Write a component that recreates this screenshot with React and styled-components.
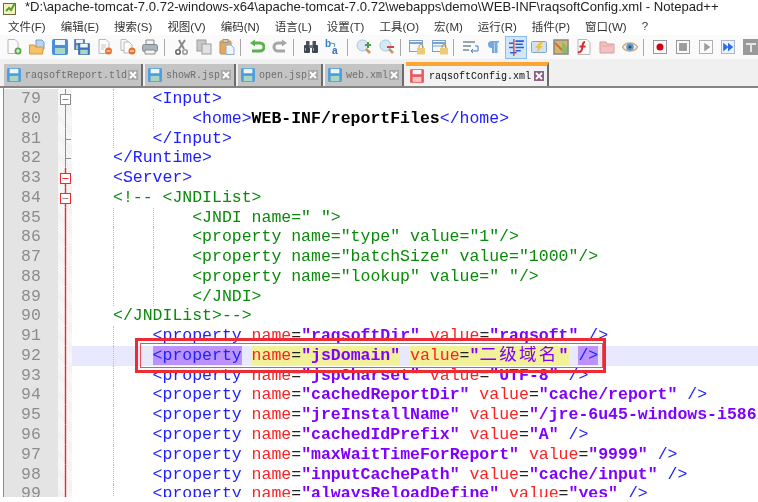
import React from 'react'
import styled, { createGlobalStyle } from 'styled-components'

const GlobalStyle = createGlobalStyle`
  html, body {
    margin: 0;
    padding: 0;
    background: #fff;
    overflow: hidden;
  }
`

const LINE_HEIGHT = 19.78
const CHAR = 9.9

const Screen = styled.div`
  width: 758px;
  height: 502px;
  overflow: hidden;
  position: relative;
  background: #fff;
  font-family: "Liberation Sans", "Noto Sans CJK SC", sans-serif;
  filter: blur(0.4px);
`

const TitleBar = styled.div`
  height: 17px;
  display: flex;
  align-items: center;
  gap: 8px;
  padding-left: 3px;
  overflow: hidden;
`

const TitleText = styled.span`
  font-size: 13.1px;
  color: #222;
  white-space: nowrap;
  margin-top: -5px;
`

const MenuBar = styled.div`
  height: 18px;
  display: flex;
  align-items: center;
  gap: 15px;
  padding-left: 8px;
`

const MenuItem = styled.span`
  font-size: 11.5px;
  color: #333;
  white-space: nowrap;
`

const ToolBar = styled.div`
  height: 25px;
  display: flex;
  align-items: center;
  padding-left: 3px;
  background: #fafafa;
  border-bottom: 1px solid #f0f0f0;
  box-sizing: border-box;
`

const Tool = styled.div`
  width: 22.7px;
  height: 23px;
  flex: none;
  display: flex;
  align-items: center;
  justify-content: center;
  box-sizing: border-box;
  background: ${p => (p.$active ? '#d3e6f8' : 'transparent')};
  border: ${p => (p.$active ? '1px solid #8cbcea' : 'none')};
`

const Sep = styled.div`
  width: 1px;
  height: 17px;
  flex: none;
  margin: 0 5px 0 2px;
  background: #a8a8a8;
`

const TabStrip = styled.div`
  height: 28px;
  display: flex;
  align-items: flex-end;
  gap: 2px;
  padding-left: 4px;
  background: #f0f0f0;
  box-sizing: border-box;
  border-bottom: 2px solid #858585;
`

const Tab = styled.div`
  height: ${p => (p.$active ? '24px' : '22px')};
  display: flex;
  align-items: center;
  padding: 0 3px 0 ${p => (p.$active ? '4px' : '3px')};
  box-sizing: border-box;
  background: ${p => (p.$active ? '#f2f2f2' : '#c4c4c4')};
  border-top: ${p => (p.$active ? '4px solid #faa534' : 'none')};
  border-right: 2px solid #6c6c6c;
`

const TabIcon = styled.svg`
  width: 14px;
  height: 14px;
  flex: none;
  margin-right: ${p => (p.$active ? '5px' : '4px')};
`

const TabLabel = styled.span`
  font-family: "Liberation Mono", monospace;
  font-size: 10px;
  margin-right: ${p => (p.$active ? '3px' : '1px')};
  color: ${p => (p.$active ? '#111' : '#6e6e6e')};
`

const TabClose = styled.span`
  width: 10px;
  height: 10px;
  flex: none;
  display: flex;
  background: ${p => (p.$active ? '#8c6482' : '#a8a8a8')};
`

const Editor = styled.div`
  height: 409px;
  padding-top: 1px;
  box-sizing: border-box;
  margin-left: 3px;
  border-left: 1px solid #8a8a8a;
  overflow: hidden;
`

const Row = styled.div`
  height: ${LINE_HEIGHT}px;
  display: grid;
  grid-template-columns: 54px 14px 1fr;
  font-family: "Liberation Mono", "Noto Sans CJK SC", monospace;
  font-size: 16.5px;
  line-height: ${LINE_HEIGHT}px;
  background: ${p => (p.$current ? '#e8e8ff' : 'transparent')};
`

const LineNumber = styled.div`
  background: #e4e4e4;
  color: #8c8c8c;
  padding-left: 17px;
`

const FoldCell = styled.div`
  background-color: #f2f2f2;
  background-image: repeating-linear-gradient(45deg, #fafafa 0 1px, #efefef 1px 2px);
  display: flex;
`

const Code = styled.div`
  padding-left: 1.4px;
  white-space: pre;
  overflow: hidden;
  display: flex;
  height: ${LINE_HEIGHT}px;
`

const Indent = styled.span`
  width: ${CHAR * 4}px;
  flex: none;
  box-sizing: border-box;
  border-left: ${p => (p.$guide ? '1px dotted #bdbdbd' : '0')};
`

const Tok = styled.span`
  color: ${p => p.$color};
  font-weight: ${p => (p.$bold ? 700 : 400)};
  background: ${p => p.$mark || 'transparent'};
`

const Wide = styled.span`
  font-size: 17.5px;
  line-height: 0;
  letter-spacing: 2.3px;
  font-family: "Noto Sans CJK SC", sans-serif;
`

const Callout = styled.div`
  position: absolute;
  left: 135px;
  top: 338px;
  width: 471px;
  height: 35px;
  box-sizing: border-box;
  border: 3px solid #ee2b34;
  pointer-events: none;
  &::after {
    content: '';
    position: absolute;
    left: 2px;
    top: 2px;
    right: 0;
    bottom: 2px;
    border: 1px solid #f0525a;
  }
`

const Floppy = ({ c = '#4a8fd8' }) => (
  <>
    <rect x=".5" y=".5" width="15" height="15" rx="1" fill={c} stroke={c} />
    <rect x="3" y="1" width="10" height="5" fill="#eef5fb" />
    <rect x="3" y="9" width="10" height="6" fill={c === '#e8585c' ? '#f6c4c4' : '#a9d6c2'} />
  </>
)

const Page = ({ x = 2, y = 0.5, w = 10, h = 14 }) => (
  <path
    d={`M${x} ${y}h${w - 3}l3 3v${h - 3}h-${w}z`}
    fill="#fbfbfb"
    stroke="#b8b8b8"
  />
)

const Icon = ({ children, w = 16, h = 16 }) => (
  <svg width={w} height={h} viewBox="0 0 16 16">{children}</svg>
)

const tools = [
  <Icon><Page /><circle cx="12" cy="12" r="3.5" fill="#5aa84a" /><path d="M10 12h4M12 10v4" stroke="#fff" /></Icon>,
  <Icon><path d="M7 1h6l2 2v7H7z" fill="#b8d4f0" stroke="#6f9fd0" /><path d="M0.5 6h5l1 2h8l-1 7h-13z" fill="#f8c268" stroke="#d8953a" /></Icon>,
  <Icon><Floppy /></Icon>,
  <Icon><svg x="0" y="0" width="11" height="11" viewBox="0 0 16 16"><Floppy c="#5b78b8" /></svg><svg x="4" y="4" width="12" height="12" viewBox="0 0 16 16"><Floppy c="#3f6fb4" /></svg></Icon>,
  <Icon><Page /><path d="M4 6h5M4 8h5M4 10h3" stroke="#c8c8c8" /><circle cx="11.5" cy="12" r="3.5" fill="#e8722c" /><path d="M9.5 12h4" stroke="#fff" /></Icon>,
  <Icon><Page x={1} w={8} h={11} /><Page x={4} y={3} w={8} h={11} /><circle cx="12" cy="12" r="3.5" fill="#e8722c" /><path d="M10 12h4" stroke="#fff" /></Icon>,
  <Icon><path d="M4 1h8v5H4z" fill="#f2f2f2" stroke="#8a8a8a" /><rect x=".5" y="5.5" width="15" height="7" rx="2" fill="#aab4bc" stroke="#7c848c" /><path d="M3 11h10v4H3z" fill="#f4f4f4" stroke="#8c8c8c" /></Icon>,
  <Sep />,
  <Icon><path d="M12 1L6 10M6 1l5 9" stroke="#8a8a8a" strokeWidth="2" /><circle cx="5" cy="13" r="2.2" fill="none" stroke="#666" strokeWidth="1.6" /><circle cx="12" cy="13" r="2.2" fill="none" stroke="#999" strokeWidth="1.6" /></Icon>,
  <Icon><rect x="1" y="1" width="9" height="11" fill="#c8c8c8" stroke="#9c9c9c" /><rect x="6" y="5" width="9" height="10" fill="#e2e2e2" stroke="#9c9c9c" /></Icon>,
  <Icon><rect x="1" y="2" width="11" height="13" rx="1" fill="#e2a860" stroke="#c08c48" /><rect x="4" y="0.5" width="5" height="3" fill="#d2ccba" stroke="#9c9580" /><path d="M7 6h5l3 3v6.500H7z" fill="#eef4fb" stroke="#8aacd4" /></Icon>,
  <Sep />,
  <Icon><path d="M5 4h6a3.500 3.500 0 0 1 0 8H3" fill="none" stroke="#5db04e" strokeWidth="3" /><path d="M6 0.500v7L1 4z" fill="#5db04e" /></Icon>,
  <Icon><path d="M11 4H6a3.500 3.500 0 0 0 0 8h7" fill="none" stroke="#a6a6a6" strokeWidth="3" /><path d="M10 0.500v7l5-3.500z" fill="#a6a6a6" /></Icon>,
  <Sep />,
  <Icon><rect x="3" y="2" width="3.500" height="5" fill="#4a525c" /><rect x="9.500" y="2" width="3.500" height="5" fill="#4a525c" /><rect x="1" y="6" width="6" height="8" rx="1" fill="#3e4650" /><rect x="9" y="6" width="6" height="8" rx="1" fill="#3e4650" /><rect x="6" y="6" width="4" height="3" fill="#6a747e" /><path d="M2.500 9v3M10.500 9v3" stroke="#95a2ae" /></Icon>,
  <Icon><text x="0" y="8" fontSize="10" fontWeight="700" fontFamily="Liberation Sans" fill="#2f7fd0">b</text><text x="7" y="15" fontSize="10" fontWeight="700" fontFamily="Liberation Sans" fill="#2f6fc0">a</text><path d="M6 4l4 1-1 3" fill="none" stroke="#3aa0a0" /></Icon>,
  <Sep />,
  <Icon><circle cx="6.500" cy="6.500" r="5.500" fill="#d6e8f6" stroke="#a8c6de" /><path d="M10 10l4 4" stroke="#c89860" strokeWidth="2.500" /><path d="M9 6h6M12 3v6" stroke="#4e9c48" strokeWidth="2" /></Icon>,
  <Icon><circle cx="6.500" cy="6.500" r="5.500" fill="#d6e8f6" stroke="#a8c6de" /><path d="M10 10l4 4" stroke="#c89860" strokeWidth="2.500" /><path d="M8 8h7" stroke="#d8434a" strokeWidth="2" /></Icon>,
  <Sep />,
  <Icon><rect x=".5" y="1.500" width="13" height="11" fill="#f4f8fc" stroke="#7aa2cc" /><path d="M1 4h12" stroke="#7aa2cc" strokeWidth="2" /><rect x="8" y="9" width="8" height="6.500" fill="#eccb78" /><path d="M10 9V7.500a2 2 0 0 1 4 0V9" fill="none" stroke="#b89a54" /></Icon>,
  <Icon><rect x=".5" y="1.500" width="13" height="11" fill="#f4f8fc" stroke="#7aa2cc" /><path d="M1 7h12" stroke="#7aa2cc" /><path d="M1 4h12" stroke="#7aa2cc" strokeWidth="2" /><rect x="8" y="9" width="8" height="6.500" fill="#eccb78" /><path d="M10 9V7.500a2 2 0 0 1 4 0V9" fill="none" stroke="#b89a54" /></Icon>,
  <Sep />,
  <Icon><path d="M0 3h12M0 7h8M0 11h6" stroke="#7b868f" strokeWidth="1.600" /><path d="M12 7h3v5H9" fill="none" stroke="#3f7fc4" /><path d="M10 10l-2 2 2 2" fill="none" stroke="#3f7fc4" /></Icon>,
  <Icon><path d="M6 2h8v1.500h-1.500V14H10V3.500H9.500V14H7V9a3.500 3.500 0 0 1-1-7z" fill="#74a8e0" /></Icon>,
  <Icon w={17} h={17}><path d="M7 2h8M7 5h7M7 8h8M7 11h5M1 4h4M1 8h4M2 13h6" stroke="#2a5cd8" strokeWidth="1.500" /><path d="M5.500 0v16" stroke="#e0352e" strokeWidth="1.200" /></Icon>,
  <Icon><rect x=".5" y="2.500" width="15" height="11" rx="1" fill="#d0e2f2" stroke="#7ea4c8" /><path d="M9 3L4 9h3l-2 5 7-7H9l3-4z" fill="#f0c040" /></Icon>,
  <Icon><rect x="1" y="1" width="14" height="14" fill="#d8b468" stroke="#8c8c8c" strokeWidth="1.600" /><path d="M2 4l10 10" stroke="#dd6a3c" strokeWidth="2" /><path d="M9 2l5 6v6H9z" fill="#8cba68" /></Icon>,
  <Icon><Page x={2} w={12} h={15} /><path d="M9 3C6 3 7 7 6 10c-.5 2-2 4-4 3M3.500 7.500h6" fill="none" stroke="#d42a30" strokeWidth="2" /></Icon>,
  <Icon><path d="M1 3h6l1 2h7v9H1z" fill="#f2c2c2" stroke="#d89898" /><path d="M3 7h10" stroke="#e6a4a4" /></Icon>,
  <Icon><path d="M0.500 8C4 2.500 12 2.500 15.500 8 12 13.500 4 13.500 0.500 8z" fill="#f3f1e6" stroke="#c8a878" strokeWidth="1.300" /><circle cx="8" cy="8" r="3.800" fill="#5f98cc" /><circle cx="8" cy="8" r="1.500" fill="#2c4c78" /></Icon>,
  <Sep />,
  <Icon w={14} h={14}><rect x=".5" y=".5" width="15" height="15" fill="#fafafa" stroke="#9a9a9a" strokeWidth="1.300" /><circle cx="8" cy="8" r="4" fill="#d40012" /></Icon>,
  <Icon w={14} h={14}><rect x=".5" y=".5" width="15" height="15" fill="#fafafa" stroke="#9a9a9a" strokeWidth="1.300" /><rect x="3.500" y="3.500" width="9" height="9" fill="#9c9c9c" /></Icon>,
  <Icon w={14} h={14}><rect x=".5" y=".5" width="15" height="15" fill="#fafafa" stroke="#b0b0b0" strokeWidth="1.300" /><path d="M6 3l7 5-7 5z" fill="#9c9c9c" /></Icon>,
  <Icon w={14} h={14}><rect x=".5" y=".5" width="15" height="15" fill="#eef2fa" stroke="#a8b8d0" strokeWidth="1.300" /><path d="M2.500 3l6 5-6 5zM8 3l6 5-6 5z" fill="#2d6fe0" /></Icon>,
  <Icon><rect x="0" y="0" width="16" height="16" fill="#9a9a9a" /><path d="M3 4h10v2H9v7H7V6H3z" fill="#e6e6e6" /></Icon>,
]

const ACTIVE_TOOL = 26

const menus = ['文件(F)', '编辑(E)', '搜索(S)', '视图(V)', '编码(N)', '语言(L)', '设置(T)', '工具(O)', '宏(M)', '运行(R)', '插件(P)', '窗口(W)', '?']

const tabs = [
  { name: 'raqsoftReport.tld' },
  { name: 'showR.jsp' },
  { name: 'open.jsp' },
  { name: 'web.xml' },
  { name: 'raqsoftConfig.xml', active: true },
]

// indent levels in 4-column steps, guides are drawn from level 1 on
const lines = [
  [79, 2, '<Input>'],
  [80, 3, '<home>WEB-INF/reportFiles</home>'],
  [81, 2, '</Input>'],
  [82, 1, '</Runtime>'],
  [83, 1, '<Server>'],
  [84, 1, '<!-- <JNDIList>', 'comment'],
  [85, 3, '<JNDI name=" ">', 'comment'],
  [86, 3, '<property name="type" value="1"/>', 'comment'],
  [87, 3, '<property name="batchSize" value="1000"/>', 'comment'],
  [88, 3, '<property name="lookup" value=" "/>', 'comment'],
  [89, 3, '</JNDI>', 'comment'],
  [90, 1, '</JNDIList>-->', 'comment'],
  [91, 2, '<property name="raqsoftDir" value="raqsoft" />'],
  [92, 2, null],
  [93, 2, '<property name="jspCharset" value="UTF-8" />'],
  [94, 2, '<property name="cachedReportDir" value="cache/report" />'],
  [95, 2, '<property name="jreInstallName" value="/jre-6u45-windows-i586/" />'],
  [96, 2, '<property name="cachedIdPrefix" value="A" />'],
  [97, 2, '<property name="maxWaitTimeForReport" value="9999" />'],
  [98, 2, '<property name="inputCachePath" value="cache/input" />'],
  [99, 2, '<property name="alwaysReloadDefine" value="yes" />'],
]

const BLUE = '#2020ff'
const RED = '#ff2020'
const PURPLE = '#8000ff'
const GREEN = '#0a8a0a'
const SELECT = '#bb93ff'
const MATCH = '#f1f19a'

const tokenize = text => {
  const parts = text.match(/<\/?\w+|\/?>|"[^"]*"|=|\s+|[^<>"=\s]+/g)
  let inTag = false
  return parts.map((part, i) => {
    if (part[0] === '<') inTag = true
    if (part[0] === '"') return <Tok key={i} $color={PURPLE} $bold>{part}</Tok>
    if (part === '=') return <Tok key={i} $color="#222">{part}</Tok>
    if (part[0] === '<' || part.endsWith('>')) {
      if (part.endsWith('>')) inTag = false
      return <Tok key={i} $color={BLUE}>{part}</Tok>
    }
    if (/^\s+$/.test(part)) return part
    return inTag
      ? <Tok key={i} $color={RED}>{part}</Tok>
      : <Tok key={i} $color="#000" $bold>{part}</Tok>
  })
}

const CurrentLine = () => (
  <span>
    <Tok $color={BLUE} $mark={SELECT}>{'<property'}</Tok>
    {' '}
    <Tok $color={RED} $mark={MATCH}>name</Tok>
    <Tok $color="#222" $mark={MATCH}>=</Tok>
    <Tok $color={PURPLE} $mark={MATCH} $bold>"jsDomain"</Tok>
    {' '}
    <Tok $color={RED} $mark={MATCH}>value</Tok>
    <Tok $color="#222" $mark={MATCH}>=</Tok>
    <Tok $color={PURPLE} $mark={MATCH} $bold>"</Tok>
    <Tok $color={PURPLE} $mark={MATCH}><Wide>二级域名</Wide></Tok>
    <Tok $color={PURPLE} $mark={MATCH} $bold>"</Tok>
    {' '}
    <Tok $color={BLUE} $mark={SELECT}>{'/>'}</Tok>
  </span>
)

const FoldMark = ({ num }) => {
  const line = num >= 83 ? '#f02830' : '#8c8c8c'
  const h = LINE_HEIGHT
  return (
    <svg width="14" height={h} viewBox={`0 0 14 ${h}`}>
      <path d={`M7.500 0V${h}`} stroke={line} strokeWidth={num >= 83 ? 1.4 : 1} />
      {(num === 81 || num === 82) && <path d="M7.500 10.500H13" stroke={line} />}
      {(num === 79 || num === 83 || num === 84) && (
        <>
          <rect x="2.500" y="5.500" width="10" height="10" fill="#fff" stroke={line} />
          <path d="M4.500 10.500h6" stroke={num === 83 ? '#f02830' : '#8c8c8c'} />
        </>
      )}
    </svg>
  )
}

const Line = ({ num, depth, text, kind }) => (
  <Row $current={num === 92}>
    <LineNumber>{num}</LineNumber>
    <FoldCell><FoldMark num={num} /></FoldCell>
    <Code>
      {Array.from({ length: depth }, (_, i) => <Indent key={i} $guide={i > 0} />)}
      {text === null
        ? <CurrentLine />
        : kind === 'comment'
          ? <Tok $color={GREEN}>{text}</Tok>
          : <span>{tokenize(text)}</span>}
    </Code>
  </Row>
)

const App = () => (
  <Screen>
    <GlobalStyle />
    <TitleBar>
      <svg width="14" height="13" viewBox="0 0 14 13">
        <rect x=".5" y="1.500" width="12" height="11" fill="#f6f2c0" stroke="#6a6a3a" />
        <path d="M3 9l3-3 2 2 4-7" fill="none" stroke="#5aa02c" strokeWidth="2" />
      </svg>
      <TitleText>*D:\apache-tomcat-7.0.72-windows-x64\apache-tomcat-7.0.72\webapps\demo\WEB-INF\raqsoftConfig.xml - Notepad++</TitleText>
    </TitleBar>
    <MenuBar>
      {menus.map(m => <MenuItem key={m}>{m}</MenuItem>)}
    </MenuBar>
    <ToolBar>
      {tools.map((t, i) => (t.type === Sep
        ? <Sep key={i} />
        : <Tool key={i} $active={i === ACTIVE_TOOL}>{t}</Tool>))}
    </ToolBar>
    <TabStrip>
      {tabs.map(t => (
        <Tab key={t.name} $active={t.active}>
          <TabIcon $active={t.active} viewBox="0 0 16 16"><Floppy c={t.active ? '#e8585c' : '#4a9ee0'} /></TabIcon>
          <TabLabel $active={t.active}>{t.name}</TabLabel>
          <TabClose $active={t.active}>
            <svg width="10" height="10" viewBox="0 0 10 10"><path d="M2 2l6 6M8 2l-6 6" stroke="#fff" strokeWidth="1.800" /></svg>
          </TabClose>
        </Tab>
      ))}
    </TabStrip>
    <Editor>
      {lines.map(([num, depth, text, kind]) => (
        <Line key={num} num={num} depth={depth} text={text} kind={kind} />
      ))}
    </Editor>
    <Callout />
  </Screen>
)

export default App
